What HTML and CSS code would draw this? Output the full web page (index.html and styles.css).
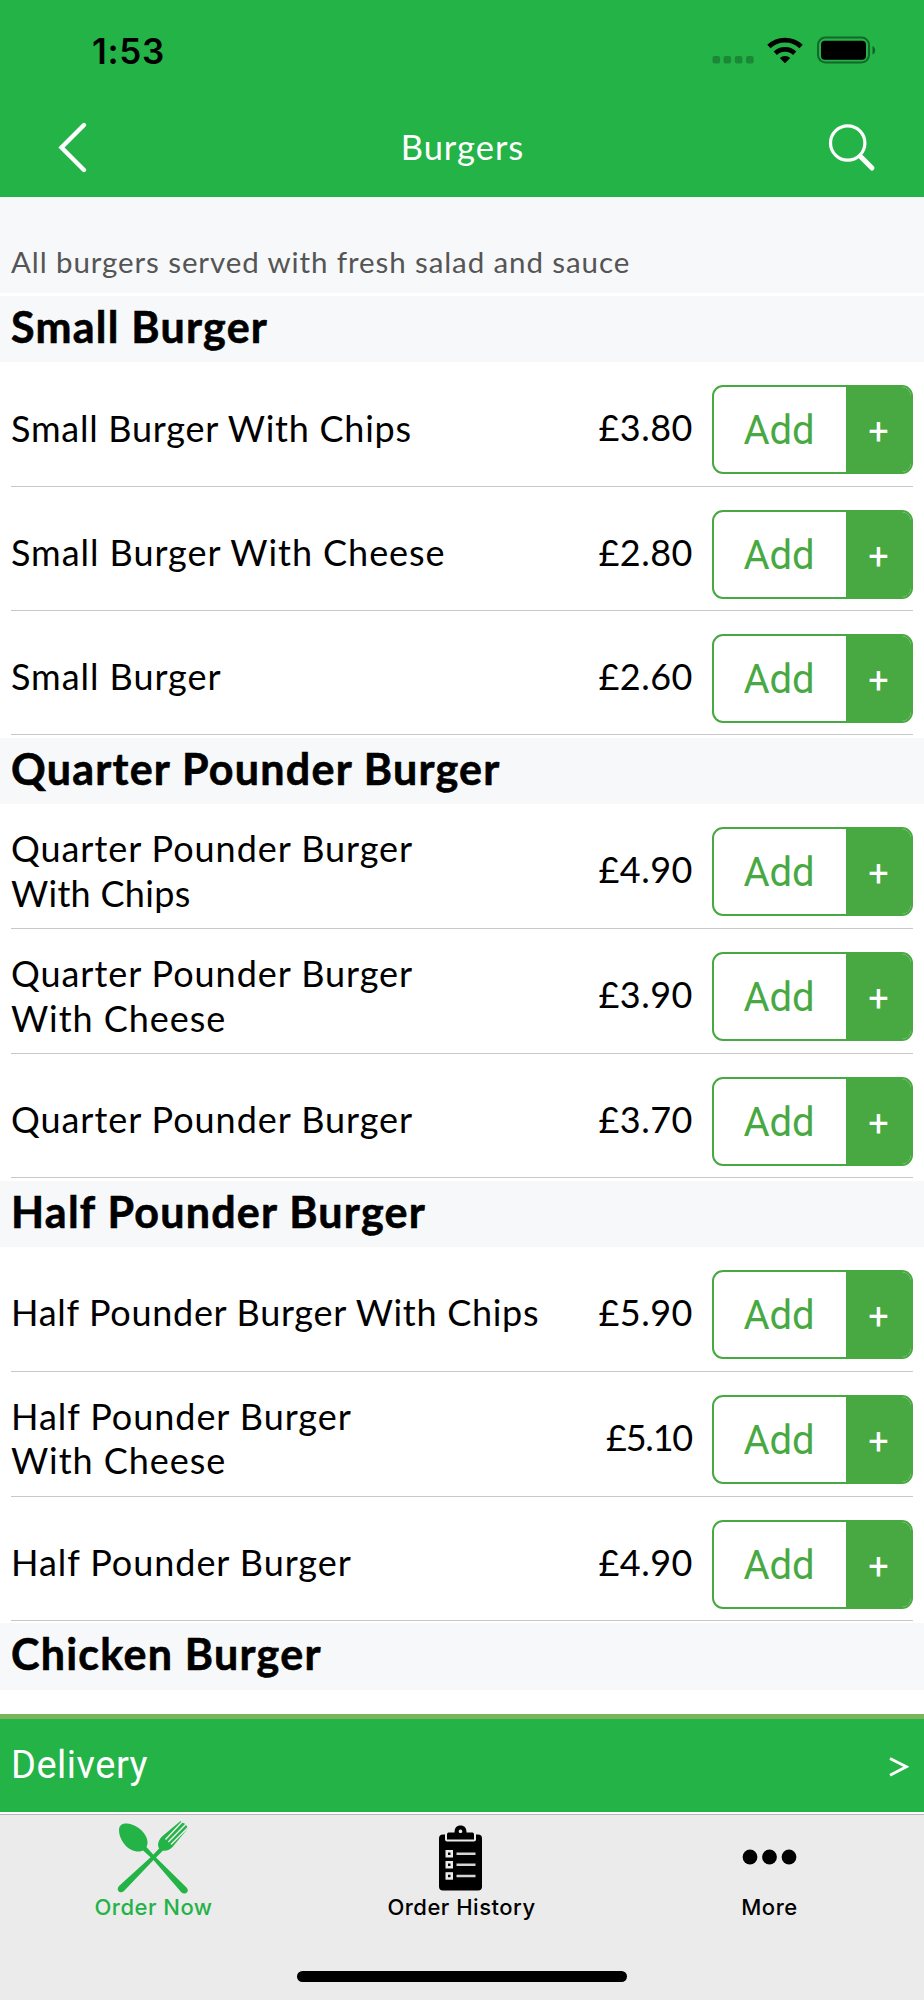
FILE: index.html
```html
<!DOCTYPE html>
<html lang="en">
<head>
<meta charset="utf-8">
<title>Burgers</title>
<link rel="stylesheet" href="styles.css">
</head>
<body>
<div class="app">
  <header class="top">
    <div class="status">
      <span class="time">1:53</span>
      <svg class="status-icons" width="166" height="32" viewBox="0 0 166 32">
        <g fill="#000" fill-opacity=".24"><rect x=".5" y="20" width="7.6" height="7.4" rx="2"/><rect x="11.5" y="20" width="7.6" height="7.4" rx="2"/><rect x="22.8" y="20" width="7.6" height="7.4" rx="2"/><rect x="34" y="20" width="7.6" height="7.4" rx="2"/></g>
        <path d="M73 27.300l-5.200-5.200a7.600 7.600 0 0 1 10.400 0z"/>
        <g fill="none" stroke="#000" stroke-width="4.800"><path d="M63.300 17.300a14.200 14.200 0 0 1 19.400 0"/><path d="M56.900 10.500a23.400 23.400 0 0 1 32.200 0"/></g>
        <rect x="106" y="1.500" width="51" height="25" rx="7.500" fill="none" stroke="#000" stroke-opacity=".42" stroke-width="2"/>
        <rect x="109" y="4.700" width="45" height="19" rx="4" fill="#000"/>
        <path d="M160.500 10c3.500 1.200 3.500 7.400 0 8.600z" fill-opacity=".45"/>
      </svg>
    </div>
    <nav class="nav">
      <svg class="back" width="36" height="56" viewBox="0 0 36 56"><path d="M30 5L7.500 27.500 30 50" fill="none" stroke="#fff" stroke-width="4.400" stroke-linecap="round"/></svg>
      <h1 class="title">Burgers</h1>
      <svg class="search" width="50" height="50" viewBox="0 0 50 50"><g fill="none" stroke="#fff"><circle cx="20.700" cy="21" r="17.200" stroke-width="3.200"/><path d="M33.500 34.500l11.500 11.500" stroke-width="5" stroke-linecap="round"/></g></svg>
    </nav>
  </header>
  <p class="note">All burgers served with fresh salad and sauce</p>
  <main class="menu">
    <section class="group">
      <h2 class="group-title">Small Burger</h2>
      <div class="item"><span class="name mid">Small Burger With Chips</span><span class="price">£3.80</span><button class="add"><span class="add-label">Add</span><span class="plus">+</span></button></div>
      <div class="item"><span class="name">Small Burger With Cheese</span><span class="price">£2.80</span><button class="add"><span class="add-label">Add</span><span class="plus">+</span></button></div>
      <div class="item"><span class="name">Small Burger</span><span class="price">£2.60</span><button class="add"><span class="add-label">Add</span><span class="plus">+</span></button></div>
    </section>
    <section class="group">
      <h2 class="group-title">Quarter Pounder Burger</h2>
      <div class="item tall"><span class="name">Quarter Pounder Burger<br><span class="sub">With Chips</span></span><span class="price">£4.90</span><button class="add"><span class="add-label">Add</span><span class="plus">+</span></button></div>
      <div class="item tall"><span class="name">Quarter Pounder Burger<br>With Cheese</span><span class="price">£3.90</span><button class="add"><span class="add-label">Add</span><span class="plus">+</span></button></div>
      <div class="item"><span class="name">Quarter Pounder Burger</span><span class="price">£3.70</span><button class="add"><span class="add-label">Add</span><span class="plus">+</span></button></div>
    </section>
    <section class="group">
      <h2 class="group-title">Half Pounder Burger</h2>
      <div class="item"><span class="name long">Half Pounder Burger With Chips</span><span class="price">£5.90</span><button class="add"><span class="add-label">Add</span><span class="plus">+</span></button></div>
      <div class="item tall"><span class="name">Half Pounder Burger<br>With Cheese</span><span class="price tight">£5.10</span><button class="add"><span class="add-label">Add</span><span class="plus">+</span></button></div>
      <div class="item"><span class="name">Half Pounder Burger</span><span class="price">£4.90</span><button class="add"><span class="add-label">Add</span><span class="plus">+</span></button></div>
    </section>
    <section class="group">
      <h2 class="group-title">Chicken Burger</h2>
    </section>
  </main>
  <div class="delivery"><span class="delivery-label">Delivery</span><svg class="chevron" width="20" height="22" viewBox="0 0 20 22"><path d="M1 2.500l16.300 8.300L1 19.200" fill="none" stroke="#fff" stroke-width="2.900"/></svg></div>
  <footer class="tabs">
    <div class="tab active">
      <svg width="76" height="76" viewBox="0 0 76 76" fill="currentColor">
        <path d="M4 10C4 5 7.500 3.200 12 3.400 23 4.500 32.500 14 32.500 22.500c0 6-4.500 9.500-11 9C11 30 4 19 4 10z"/>
        <path d="M27 29.500l3.500-3.500 10 11 31 30.500c3.800 4.200-1.500 8-5 5L38 39.500z"/>
        <path d="M46 26.500l3 3-9.500 9.500L9 71c-4 3.500-8.500-.8-5-5L37 36z"/>
        <path d="M47 16.500L65.500 1l1 1.200L69.500 3.500l1.500 1.300 2 3.500L57.500 27c-3 3.500-7.500 4.500-11.500 3-4.500-2.500-3.500-9 1-13.500z"/>
        <g stroke="#ebebeb" stroke-width="1.500"><path d="M50.500 19.500L67.500 1.500M53.300 22L71 4M56 24.500L74 6.500"/></g>
      </svg>
      <span class="tab-label">Order Now</span>
    </div>
    <div class="tab">
      <svg class="clipboard" width="48" height="76" viewBox="0 0 48 76">
        <rect x="3" y="14.500" width="43" height="56" rx="4"/>
        <path d="M9 12h31v7.500c0 1-1 2-2 2H11c-1 0-2-1-2-2z" fill="#ebebeb"/>
        <path fill-rule="evenodd" d="M11 19.500v-5c0-1.500 1-2 2-2h5.500c0-4.500 2-7 6-7s6 2.500 6 7H36c1 0 2 .5 2 2v5zM24.500 9.500a1.800 1.800 0 1 0 .01 0z"/>
        <g fill="#ebebeb"><rect x="9.500" y="30" width="7.500" height="7.500"/><rect x="9.500" y="41" width="7.500" height="7.500"/><rect x="9.500" y="52.200" width="7.500" height="7.500"/></g>
        <g><rect x="12" y="32.500" width="2.500" height="2.500"/><rect x="12" y="43.500" width="2.500" height="2.500"/><rect x="12" y="54.700" width="2.500" height="2.500"/></g>
        <path d="M20.500 33.700h19M20.500 44.700h19M20.500 56h19" stroke="#d2d4d5" stroke-width="2.400"/>
      </svg>
      <span class="tab-label">Order History</span>
    </div>
    <div class="tab">
      <svg width="56" height="76" viewBox="0 0 56 76"><circle cx="9" cy="37" r="7.400"/><circle cx="28.500" cy="37" r="7.400"/><circle cx="48" cy="37" r="7.400"/></svg>
      <span class="tab-label">More</span>
    </div>
  </footer>
  <div class="home"><i class="home-bar"></i></div>
</div>
</body>
</html>
```
FILE: styles.css
```css
* { box-sizing: border-box; }
body { margin: 0; background: #fff; color: #000; font-family: Lato, sans-serif; }
.app { width: 924px; height: 2000px; display: flex; flex-direction: column; overflow: hidden; }
.top { height: 197px; flex: none; background: #23b347; }
.status { height: 98px; padding: 36px 46px 0 92px; display: flex; justify-content: space-between; align-items: flex-start; }
.time { font: 600 35px/30px Inter, sans-serif; letter-spacing: .7px; }
.nav { height: 98px; padding: 0 47px 0 54px; display: grid; grid-template-columns: 1fr auto 1fr; align-items: center; }
.back { margin-top: 1px; }
.title { margin: -1px 6px 0 0; color: #fff; font-size: 34.5px; font-weight: 400; line-height: 40px; letter-spacing: 1px; }
.search { justify-self: end; margin-top: -1px; }
.note { margin: 0; height: 96px; flex: none; padding: 47px 11px 0; background: #f7f8fa; color: #555; font-size: 29.5px; line-height: 36px; letter-spacing: .9px; white-space: nowrap; }
.menu { flex: none; height: 1421px; padding-top: 3px; }
.group { padding-bottom: 2.5px; }
.group-title { margin: 0; height: 66.3px; padding: 6px 11px 0; background: #f7f8fa; font-size: 43px; line-height: 50px; font-weight: 700; letter-spacing: 1.25px; -webkit-text-stroke: .6px #000; }
.item { height: 124.4px; margin: 0 11px; padding: 23px 0 0; border-bottom: 1px solid #c8c8c8; display: grid; grid-template-columns: 1fr auto 201px; column-gap: 19px; align-items: start; }
.item.tall { height: 124.9px; }
.name { height: 89px; display: flex; align-items: center; font-size: 36px; line-height: 44.6px; letter-spacing: .95px; white-space: nowrap; margin-top: -2px; }
.name.mid { letter-spacing: .75px; }
.name.long { letter-spacing: .7px; }
.sub { letter-spacing: .3px; }
.tall .name { display: block; margin-top: -1px; }
.price { font-size: 36px; line-height: 85px; letter-spacing: .5px; }
.price.tight { letter-spacing: -1.2px; padding-right: 1px; }
.add { width: 201px; height: 89px; padding: 0; border: 2px solid #48a842; border-radius: 11px; background: #fff; display: grid; grid-template-columns: 1fr 65px; overflow: hidden; font-family: Roboto, sans-serif; }
.add-label { color: #48a842; font-size: 40px; line-height: 88px; text-align: center; font-weight: 400; padding-right: 2px; }
.plus { background: #48a842; color: #fff; font-size: 36px; line-height: 90px; text-align: center; }
.delivery { height: 98px; flex: none; border-top: 5px solid #7ab55c; background: #23b347; color: #fff; display: flex; justify-content: space-between; align-items: center; padding: 0 15px 0 11px; }
.delivery-label { font: 400 38px/50px Roboto, sans-serif; letter-spacing: .5px; margin-top: -2px; }
.chevron { margin-top: 3px; }
.tabs { height: 131px; flex: none; background: #ebebeb; border-top: 2px solid #fff; box-shadow: inset 0 1px #b5b5ba; display: grid; grid-template-columns: repeat(3, 308px); }
.tab { display: flex; flex-direction: column; align-items: center; padding-top: 6px; }
.tab svg { margin-left: -3px; }
.tab .clipboard { margin-left: -5px; }
.tab-label { font: 500 22px/22px Inter, sans-serif; letter-spacing: .5px; margin-left: -1px; }
.active { color: #23b347; }
.home { flex: 1; background: #ebebeb; display: flex; justify-content: center; padding-top: 28px; }
.home-bar { width: 330px; height: 11px; border-radius: 6px; background: #000; }
```
